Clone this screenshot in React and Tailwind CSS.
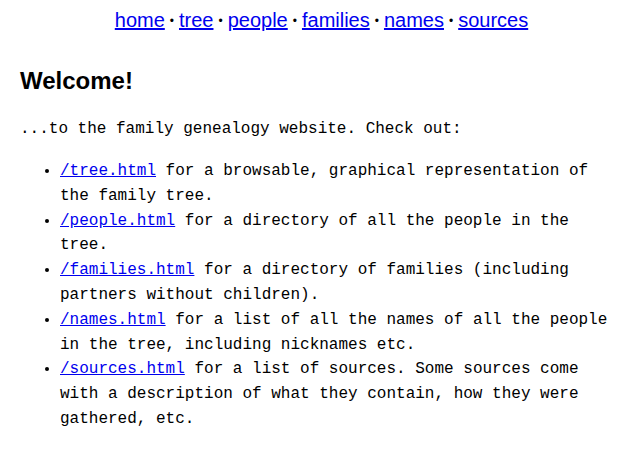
export default function App() {
  const link = "text-[#0000ee] underline";
  const Sep = () => <span className="mx-[5px] text-[12px] align-[2px]">•</span>;
  return (
    <div className="px-5 pt-[5px] font-['Liberation_Mono',monospace] text-base leading-[1.55] text-black bg-white">
      <nav className="text-center font-['Liberation_Sans',Arial,sans-serif] text-[20px] leading-[1.55]">
        <a href="#" className={link}>home</a><Sep /><a href="#" className={link}>tree</a><Sep /><a href="#" className={link}>people</a><Sep /><a href="#" className={link}>families</a><Sep /><a href="#" className={link}>names</a><Sep /><a href="#" className={link}>sources</a>
      </nav>
      <h2 className="mt-[26px] mb-[18px] font-['Liberation_Sans',Arial,sans-serif] text-2xl font-bold leading-[1.55]">Welcome!</h2>
      <p className="mb-[17px]">...to the family genealogy website. Check out:</p>
      <ul className="list-disc pl-10">
        <li><a href="#" className={link}>/tree.html</a> for a browsable, graphical representation of the family tree.</li>
        <li><a href="#" className={link}>/people.html</a> for a directory of all the people in the tree.</li>
        <li><a href="#" className={link}>/families.html</a> for a directory of families (including partners without children).</li>
        <li><a href="#" className={link}>/names.html</a> for a list of all the names of all the people in the tree, including nicknames etc.</li>
        <li><a href="#" className={link}>/sources.html</a> for a list of sources. Some sources come with a description of what they contain, how they were gathered, etc.</li>
      </ul>
    </div>
  );
}
